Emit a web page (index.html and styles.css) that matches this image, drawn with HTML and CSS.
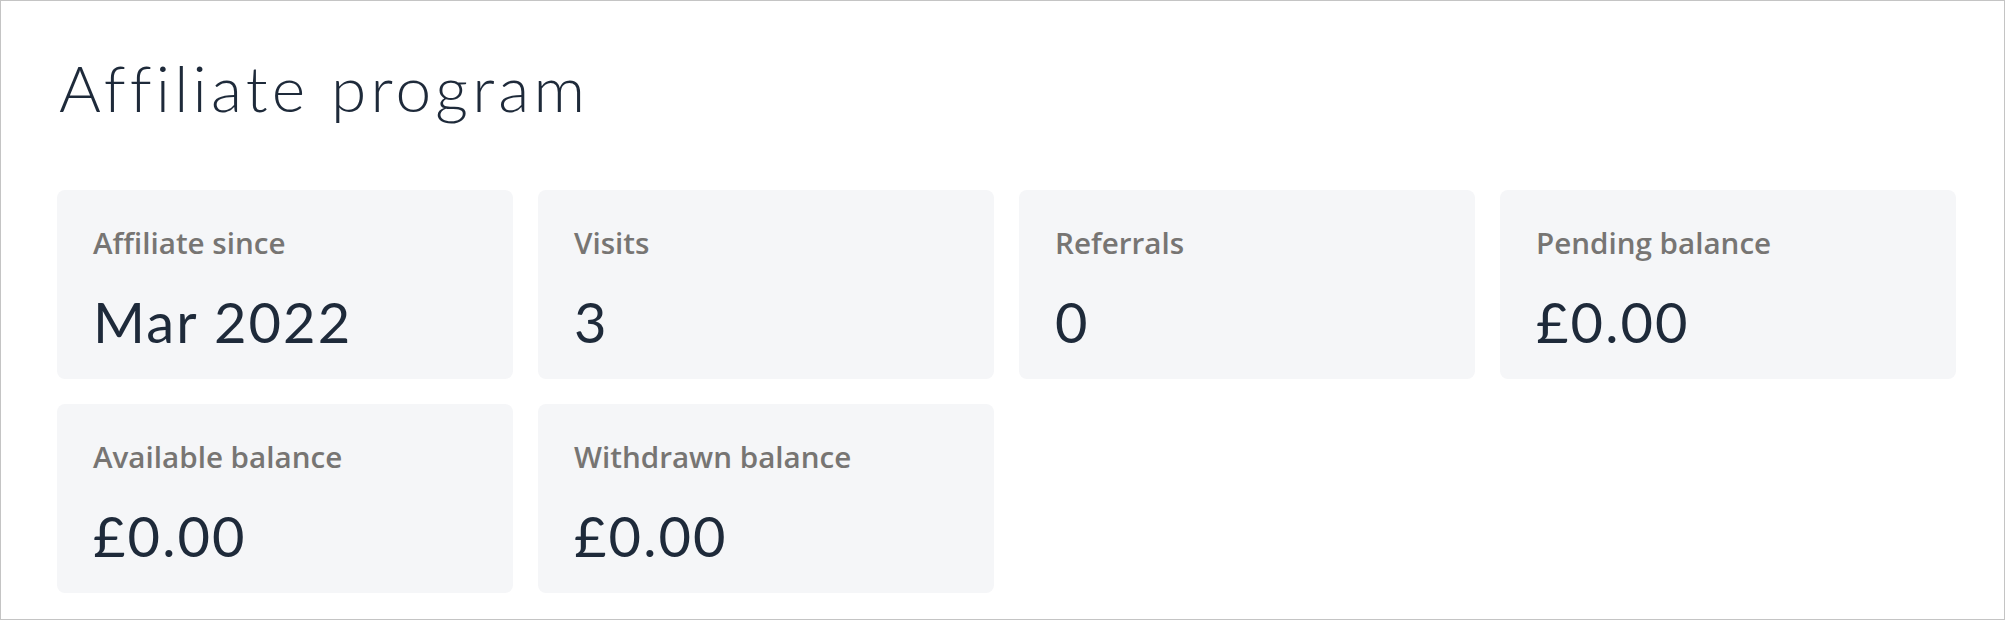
FILE: index.html
```html
<!DOCTYPE html>
<html lang="en">
<head>
<meta charset="utf-8">
<title>Affiliate program</title>
<link rel="stylesheet" href="styles.css">
</head>
<body>
<main class="frame">
  <h1 class="title">Affiliate program</h1>
  <section class="stats">
    <div class="card">
      <div class="label">Affiliate since</div>
      <div class="value">Mar 2022</div>
    </div>
    <div class="card">
      <div class="label">Visits</div>
      <div class="value">3</div>
    </div>
    <div class="card">
      <div class="label">Referrals</div>
      <div class="value">0</div>
    </div>
    <div class="card">
      <div class="label">Pending balance</div>
      <div class="value">£0.00</div>
    </div>
    <div class="card">
      <div class="label">Available balance</div>
      <div class="value">£0.00</div>
    </div>
    <div class="card">
      <div class="label">Withdrawn balance</div>
      <div class="value">£0.00</div>
    </div>
  </section>
</main>
</body>
</html>
```

FILE: styles.css
```css
html, body {
  margin: 0;
  padding: 0;
  background: #ffffff;
}

.frame {
  box-sizing: border-box;
  width: 2005px;
  height: 620px;
  border: 1px solid #c4c4c4;
  padding: 55px 48px 0 56px;
  background: #ffffff;
  overflow: hidden;
}

.title {
  margin: 0 0 70px 0;
  padding-left: 2px;
  font-family: "Lato", "Liberation Sans", sans-serif;
  font-weight: 300;
  font-size: 64px;
  line-height: 64px;
  letter-spacing: 4.2px;
  color: #1e2a3a;
}

.stats {
  display: grid;
  grid-template-columns: repeat(4, 1fr);
  gap: 25px;
}

.card {
  background: #f5f6f8;
  border-radius: 8px;
  padding: 33px 36px 25px 36px;
  height: 189px;
  box-sizing: border-box;
}

.label {
  font-family: "Open Sans", "Noto Sans", sans-serif;
  font-weight: 600;
  font-size: 29.6px;
  line-height: 40px;
  color: #777573;
}

.value {
  margin-top: 27px;
  font-family: "Lato", "Liberation Sans", sans-serif;
  font-weight: 400;
  font-size: 56px;
  line-height: 64px;
  letter-spacing: 2.1px;
  color: #1e2a3a;
}
```
